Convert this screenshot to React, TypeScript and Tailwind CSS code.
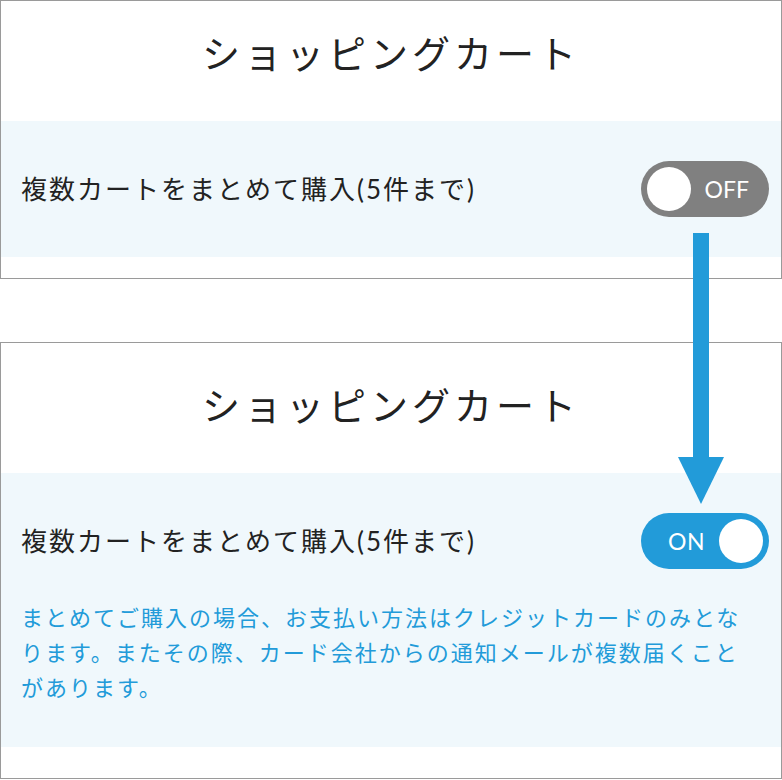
import React from "react";

type PanelProps = {
  on: boolean;
  headerPad: string;
  footerPad: string;
};

function Toggle({ on }: { on: boolean }) {
  if (on) {
    return (
      <div className="flex h-[56px] w-[128px] shrink-0 items-center justify-between rounded-full bg-[#229bd9] pl-[27px] pr-[6px]">
        <span className="text-[23px] leading-none tracking-[0.5px] text-white">ON</span>
        <span className="h-[44px] w-[44px] rounded-full bg-white" />
      </div>
    );
  }
  return (
    <div className="flex h-[56px] w-[128px] shrink-0 items-center justify-between rounded-full bg-[#808080] pl-[6px] pr-[20px]">
      <span className="h-[44px] w-[44px] rounded-full bg-white" />
      <span className="text-[23px] leading-none text-white">OFF</span>
    </div>
  );
}

function Panel({ on, headerPad, footerPad }: PanelProps) {
  return (
    <section className="border border-[#9a9a9a] bg-white">
      <header className={headerPad}>
        <h1 className="text-center text-[38px] font-normal leading-[50px] tracking-[4px] text-[#222]">
          ショッピングカート
        </h1>
      </header>
      <div className="bg-[#f0f8fc] pb-[40px] pt-[40px]">
        <div className="flex items-center justify-between pl-[20px] pr-[12px]">
          <span className="text-[26px] leading-[56px] tracking-[2px] text-[#222]">
            複数カートをまとめて購入(5件まで)
          </span>
          <Toggle on={on} />
        </div>
        {on && (
          <p className="mb-[2px] mt-[31px] px-[20px] text-[22px] leading-[35px] tracking-[2px] text-[#229bd9]">
            まとめてご購入の場合、お支払い方法はクレジットカードのみとなります。またその際、カード会社からの通知メールが複数届くことがあります。
          </p>
        )}
      </div>
      <div className={footerPad} />
    </section>
  );
}

export default function App() {
  return (
    <div className="relative h-[780px] w-[782px] overflow-hidden bg-white font-['Lato','Noto_Sans_CJK_JP',sans-serif]">
      <Panel on={false} headerPad="pb-[43px] pt-[27px]" footerPad="h-[21px]" />
      <div className="h-[63px]" />
      <Panel on headerPad="pb-[43px] pt-[37px]" footerPad="h-[31px]" />

      {/* down arrow from the off switch to the on switch */}
      <svg
        className="absolute left-[678px] top-[233px]"
        width="46"
        height="271"
        viewBox="0 0 46 271"
      >
        <rect x="15" y="0" width="16" height="226" fill="#229bd9" />
        <polygon points="0,224 46,224 23,271" fill="#229bd9" />
      </svg>
    </div>
  );
}
